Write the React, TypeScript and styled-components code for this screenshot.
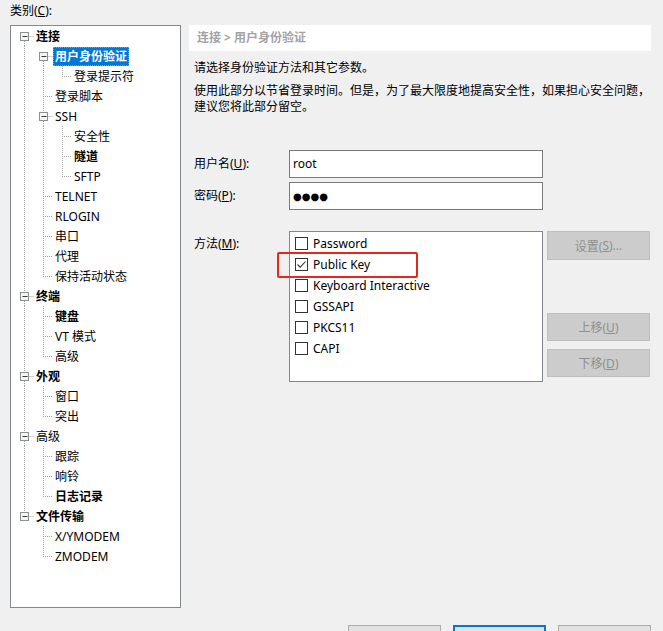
import React from "react";
import styled, { createGlobalStyle } from "styled-components";

interface TreeNode {
  label: string;
  bold?: boolean;
  selected?: boolean;
  children?: TreeNode[];
}

interface FlatRow {
  node: TreeNode;
  depth: number;
  guides: boolean[];
  isFirst: boolean;
  isLast: boolean;
}

interface LabelProps {
  $bold?: boolean;
  $selected?: boolean;
}

interface BtnProps {
  $focused?: boolean;
}

const GlobalStyle = createGlobalStyle`
  html, body {
    margin: 0;
    padding: 0;
    background: #f0f0f0;
  }
  body {
    font-family: "Noto Sans", "Noto Sans CJK SC", sans-serif;
    font-size: 12px;
    color: #000;
  }
`;

const tree: TreeNode[] = [
  {
    label: "连接",
    bold: true,
    children: [
      {
        label: "用户身份验证",
        bold: true,
        selected: true,
        children: [{ label: "登录提示符" }],
      },
      { label: "登录脚本" },
      {
        label: "SSH",
        children: [
          { label: "安全性" },
          { label: "隧道", bold: true },
          { label: "SFTP" },
        ],
      },
      { label: "TELNET" },
      { label: "RLOGIN" },
      { label: "串口" },
      { label: "代理" },
      { label: "保持活动状态" },
    ],
  },
  {
    label: "终端",
    bold: true,
    children: [{ label: "键盘", bold: true }, { label: "VT 模式" }, { label: "高级" }],
  },
  {
    label: "外观",
    bold: true,
    children: [{ label: "窗口" }, { label: "突出" }],
  },
  {
    label: "高级",
    children: [{ label: "跟踪" }, { label: "响铃" }, { label: "日志记录", bold: true }],
  },
  {
    label: "文件传输",
    bold: true,
    children: [{ label: "X/YMODEM" }, { label: "ZMODEM" }],
  },
];

const methods = [
  { label: "Password", checked: false },
  { label: "Public Key", checked: true },
  { label: "Keyboard Interactive", checked: false },
  { label: "GSSAPI", checked: false },
  { label: "PKCS11", checked: false },
  { label: "CAPI", checked: false },
];

function flatten(
  nodes: TreeNode[],
  depth: number,
  guides: boolean[],
  out: FlatRow[]
): FlatRow[] {
  nodes.forEach((node, i) => {
    const isLast = i === nodes.length - 1;
    out.push({ node, depth, guides, isFirst: i === 0, isLast });
    if (node.children) {
      flatten(node.children, depth + 1, [...guides, !isLast], out);
    }
  });
  return out;
}

const Page = styled.div`
  width: 663px;
  height: 631px;
  overflow: hidden;
  padding-left: 10px;
  box-sizing: border-box;
`;

const Body = styled.div`
  display: flex;
  align-items: flex-start;
`;

const LeftCol = styled.div`
  display: flex;
  flex-direction: column;
  width: 171px;
`;

const CategoryLabel = styled.div`
  height: 25px;
  line-height: 22px;
`;

const TreeBox = styled.div`
  height: 583px;
  box-sizing: border-box;
  border: 1px solid #828790;
  background: #fff;
  padding-left: 4px;
`;

const TreeRow = styled.div`
  display: flex;
  align-items: center;
  height: 20px;
`;

const NodeLabel = styled.span<LabelProps>`
  display: inline-block;
  height: 19px;
  line-height: 17px;
  box-sizing: border-box;
  padding: 0 1px;
  white-space: nowrap;
  font-weight: ${(p) => (p.$bold ? 700 : 400)};
  color: ${(p) => (p.$selected ? "#fff" : "#000")};
  background: ${(p) => (p.$selected ? "#0078d7" : "transparent")};
  border: 1px ${(p) => (p.$selected ? "dotted #d3902e" : "solid transparent")};
`;

const RightCol = styled.div`
  display: flex;
  flex-direction: column;
  width: 462px;
  margin-left: 8px;
  padding-top: 25px;
`;

const Crumb = styled.div`
  height: 26px;
  line-height: 26px;
  background: #fff;
  padding-left: 8px;
  color: #a3a3a3;
  font-weight: 700;
`;

const Desc = styled.p<{ $gap: number }>`
  margin: ${(p) => p.$gap}px 0 0;
  padding-left: 5px;
  line-height: 16px;
`;

const Fields = styled.div`
  display: flex;
  flex-direction: column;
  gap: 4px;
  margin-top: 35px;
  padding-left: 5px;
`;

const FieldRow = styled.div`
  display: flex;
  align-items: center;
`;

const FormLabel = styled.div`
  width: 95px;
  line-height: 18px;
`;

const Field = styled.div`
  width: 254px;
  height: 28px;
  box-sizing: border-box;
  border: 1px solid #7a7a7a;
  background: #fff;
  padding-left: 3px;
  line-height: 25px;
`;

const Dots = styled.span`
  font-family: "DejaVu Sans", sans-serif;
  font-size: 10px;
`;

const MethodRow = styled.div`
  display: flex;
  align-items: flex-start;
  margin-top: 21px;
  padding-left: 5px;

  ${FormLabel} {
    padding-top: 4px;
  }
`;

const MethodList = styled.div`
  position: relative;
  width: 254px;
  height: 151px;
  box-sizing: border-box;
  border: 1px solid #828790;
  background: #fff;
  padding-top: 1px;
`;

const MethodItem = styled.div`
  display: flex;
  align-items: center;
  gap: 5px;
  height: 21px;
  padding-left: 5px;
`;

const Check = styled.span`
  display: inline-flex;
  width: 13px;
  height: 13px;
  box-sizing: border-box;
  border: 1px solid #333;
  background: #fff;
`;

const Annotation = styled.div`
  position: absolute;
  left: -13px;
  top: 20px;
  width: 141px;
  height: 26px;
  box-sizing: border-box;
  border: 2px solid #e8261c;
  border-radius: 2px;
`;

const SideButtons = styled.div`
  display: flex;
  flex-direction: column;
  margin-left: 4px;
`;

const SideButton = styled.div<{ $gap: number; $h: number }>`
  width: 103px;
  height: ${(p) => p.$h}px;
  margin-top: ${(p) => p.$gap}px;
  box-sizing: border-box;
  border: 1px solid #bfbfbf;
  background: #cccccc;
  color: #8f8f8f;
  display: flex;
  align-items: center;
  justify-content: center;
`;

const Footer = styled.div`
  display: flex;
  justify-content: flex-end;
  gap: 12px;
  padding-right: 12px;
  margin-top: 17px;
`;

const FooterButton = styled.div<BtnProps>`
  width: 93px;
  height: 23px;
  box-sizing: border-box;
  background: #e1e1e1;
  border: ${(p) => (p.$focused ? "2px solid #0078d7" : "1px solid #adadad")};
`;

function Connector({ row }: { row: FlatRow }) {
  const { depth, guides, isFirst, isLast, node } = row;
  const width = 19 * (depth + 1);
  const x = 19 * depth + 9.5;
  const hasBox = !!node.children;
  const dot = { stroke: "#a0a0a0", strokeWidth: 1, strokeDasharray: "1 1" };
  const showTop = !(hasBox && isFirst);

  return (
    <svg width={width} height={20} style={{ flex: "none", display: "block" }}>
      {guides.map((g, k) =>
        g ? <line key={k} x1={19 * k + 9.5} y1={0} x2={19 * k + 9.5} y2={20} {...dot} /> : null
      )}
      {hasBox ? (
        <>
          {showTop && <line x1={x} y1={0} x2={x} y2={6} {...dot} />}
          {!isLast && <line x1={x} y1={15} x2={x} y2={20} {...dot} />}
          <line x1={x + 5} y1={10.5} x2={19 * depth + 19} y2={10.5} {...dot} />
          <rect x={x - 4} y={6.5} width={8} height={8} fill="#f4f4f4" stroke="#8e8f8f" />
          <line x1={x - 2} y1={10.5} x2={x + 3} y2={10.5} stroke="#333c4a" />
        </>
      ) : (
        <>
          <line x1={x} y1={0} x2={x} y2={isLast ? 11 : 20} {...dot} />
          <line x1={x + 1.5} y1={10.5} x2={19 * depth + 19} y2={10.5} {...dot} />
        </>
      )}
    </svg>
  );
}

function CheckMark() {
  return (
    <svg width={11} height={11} viewBox="0 0 11 11">
      <path d="M1.5 5.5 L4.2 8.2 L9.5 2.5" fill="none" stroke="#333" strokeWidth={1.1} />
    </svg>
  );
}

function App() {
  const rows = flatten(tree, 0, [], []);

  return (
    <>
      <GlobalStyle />
      <Page>
        <Body>
          <LeftCol>
            <CategoryLabel>
              类别(<u>C</u>):
            </CategoryLabel>
            <TreeBox>
              {rows.map((row, i) => (
                <TreeRow key={i}>
                  <Connector row={row} />
                  <NodeLabel $bold={row.node.bold} $selected={row.node.selected}>
                    {row.node.label}
                  </NodeLabel>
                </TreeRow>
              ))}
            </TreeBox>
          </LeftCol>
          <RightCol>
            <Crumb>连接 &gt; 用户身份验证</Crumb>
            <Desc $gap={9}>请选择身份验证方法和其它参数。</Desc>
            <Desc $gap={7}>
              使用此部分以节省登录时间。但是，为了最大限度地提高安全性，如果担心安全问题，
              <br />
              建议您将此部分留空。
            </Desc>
            <Fields>
              <FieldRow>
                <FormLabel>
                  用户名(<u>U</u>):
                </FormLabel>
                <Field>root</Field>
              </FieldRow>
              <FieldRow>
                <FormLabel>
                  密码(<u>P</u>):
                </FormLabel>
                <Field>
                  <Dots>●●●●</Dots>
                </Field>
              </FieldRow>
            </Fields>
            <MethodRow>
              <FormLabel>
                方法(<u>M</u>):
              </FormLabel>
              <MethodList>
                {methods.map((m) => (
                  <MethodItem key={m.label}>
                    <Check>{m.checked && <CheckMark />}</Check>
                    {m.label}
                  </MethodItem>
                ))}
                <Annotation />
              </MethodList>
              <SideButtons>
                <SideButton $gap={0} $h={29}>
                  设置(<u>S</u>)...
                </SideButton>
                <SideButton $gap={53} $h={28}>
                  上移(<u>U</u>)
                </SideButton>
                <SideButton $gap={8} $h={28}>
                  下移(<u>D</u>)
                </SideButton>
              </SideButtons>
            </MethodRow>
          </RightCol>
        </Body>
        <Footer>
          <FooterButton />
          <FooterButton $focused />
          <FooterButton />
        </Footer>
      </Page>
    </>
  );
}

export default App;
